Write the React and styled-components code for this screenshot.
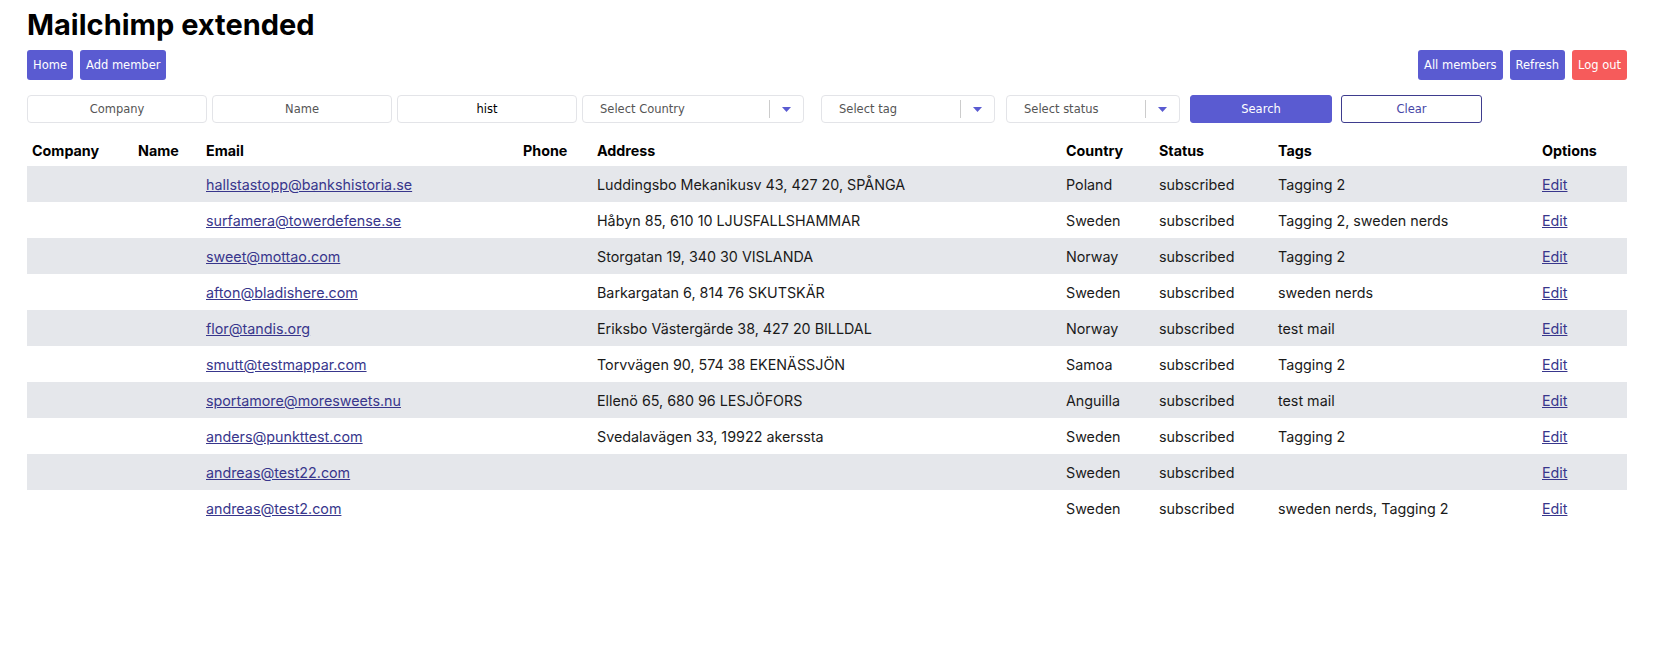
import React from "react";
import styled, { createGlobalStyle } from "styled-components";

const GlobalStyle = createGlobalStyle`
  body {
    margin: 0;
    background: #fff;
    font-family: Inter, "Liberation Sans", sans-serif;
    color: #111;
  }
`;

const Page = styled.div`
  padding: 0 28px 0 27px;
`;

const Title = styled.h1`
  margin: 7px 0 0;
  font-size: 29px;
  line-height: 36px;
  font-weight: 700;
  color: #000;
`;

const Toolbar = styled.div`
  display: flex;
  justify-content: space-between;
  margin-top: 7px;
`;

const ButtonGroup = styled.div`
  display: flex;
  gap: 7px;
`;

const NavButton = styled.button`
  height: 30px;
  padding: 0 6px;
  border: none;
  border-radius: 3px;
  background: ${(p) => (p.$danger ? "#f65b5b" : "#5a5bd1")};
  color: #fff;
  font-family: "DejaVu Sans", Tahoma, sans-serif;
  font-size: 11.5px;
  cursor: pointer;
`;

const FilterRow = styled.div`
  display: flex;
  align-items: center;
  margin-top: 15px;
  height: 28px;
`;

const TextInput = styled.input`
  box-sizing: border-box;
  width: 180px;
  height: 28px;
  margin-right: 5px;
  border: 1px solid #e3e4e8;
  border-radius: 4px;
  text-align: center;
  font-family: "DejaVu Sans", Tahoma, sans-serif;
  font-size: 11.5px;
  color: #000;
  outline: none;
  &::placeholder {
    color: #555;
  }
`;

const SelectBox = styled.div`
  box-sizing: border-box;
  display: flex;
  align-items: center;
  width: ${(p) => p.$width}px;
  height: 28px;
  margin-right: ${(p) => p.$gap}px;
  border: 1px solid #e3e4e8;
  border-radius: 4px;
  font-family: "DejaVu Sans", Tahoma, sans-serif;
  font-size: 11.5px;
  color: #555;
`;

const SelectLabel = styled.span`
  flex: 1;
  padding-left: 17px;
`;

const Separator = styled.span`
  width: 1px;
  height: 18px;
  background: #ccc;
`;

const Arrow = styled.span`
  width: 33px;
  display: flex;
  justify-content: center;
`;

const ActionButton = styled.button`
  box-sizing: border-box;
  width: ${(p) => p.$width}px;
  height: 28px;
  margin-right: 9px;
  border-radius: 3px;
  border: 1px solid ${(p) => (p.$outline ? "#3e3c8e" : "#5a5bd1")};
  background: ${(p) => (p.$outline ? "#fff" : "#5a5bd1")};
  color: ${(p) => (p.$outline ? "#4746a6" : "#fff")};
  font-family: "DejaVu Sans", Tahoma, sans-serif;
  font-size: 11.5px;
  cursor: pointer;
`;

const Table = styled.table`
  margin-top: 8px;
  width: 1600px;
  border-collapse: collapse;
  table-layout: fixed;
  font-size: 14.3px;
`;

const HeadCell = styled.th`
  width: ${(p) => p.$width - 10}px;
  height: 31px;
  padding: 4px 5px 0;
  text-align: left;
  font-weight: 700;
  color: #000;
`;

const Row = styled.tr`
  height: 36px;
  background: ${(p) => (p.$striped ? "#e5e7eb" : "#fff")};
`;

const Cell = styled.td`
  padding: 0 5px;
  color: #1a1a1a;
  white-space: nowrap;
`;

const Link = styled.a`
  color: #38368c;
  text-decoration: underline;
`;

const ArrowIcon = () => (
  <svg width="9" height="5" viewBox="0 0 9 5">
    <path d="M0 0 L9 0 L4.5 5 Z" fill="#5a5bd1" />
  </svg>
);

const Select = ({ label, width, gap }) => (
  <SelectBox $width={width} $gap={gap}>
    <SelectLabel>{label}</SelectLabel>
    <Separator />
    <Arrow>
      <ArrowIcon />
    </Arrow>
  </SelectBox>
);

const columns = [
  ["Company", 106],
  ["Name", 68],
  ["Email", 317],
  ["Phone", 74],
  ["Address", 469],
  ["Country", 93],
  ["Status", 119],
  ["Tags", 264],
  ["Options", 90],
];

const members = [
  ["hallstastopp@bankshistoria.se", "Luddingsbo Mekanikusv 43, 427 20, SPÅNGA", "Poland", "Tagging 2"],
  ["surfamera@towerdefense.se", "Håbyn 85, 610 10 LJUSFALLSHAMMAR", "Sweden", "Tagging 2, sweden nerds"],
  ["sweet@mottao.com", "Storgatan 19, 340 30 VISLANDA", "Norway", "Tagging 2"],
  ["afton@bladishere.com", "Barkargatan 6, 814 76 SKUTSKÄR", "Sweden", "sweden nerds"],
  ["flor@tandis.org", "Eriksbo Västergärde 38, 427 20 BILLDAL", "Norway", "test mail"],
  ["smutt@testmappar.com", "Torvvägen 90, 574 38 EKENÄSSJÖN", "Samoa", "Tagging 2"],
  ["sportamore@moresweets.nu", "Ellenö 65, 680 96 LESJÖFORS", "Anguilla", "test mail"],
  ["anders@punkttest.com", "Svedalavägen 33, 19922 akerssta", "Sweden", "Tagging 2"],
  ["andreas@test22.com", "", "Sweden", ""],
  ["andreas@test2.com", "", "Sweden", "sweden nerds, Tagging 2"],
];

export default function App() {
  return (
    <>
      <GlobalStyle />
      <Page>
        <Title>Mailchimp extended</Title>
        <Toolbar>
          <ButtonGroup>
            <NavButton>Home</NavButton>
            <NavButton>Add member</NavButton>
          </ButtonGroup>
          <ButtonGroup>
            <NavButton>All members</NavButton>
            <NavButton>Refresh</NavButton>
            <NavButton $danger>Log out</NavButton>
          </ButtonGroup>
        </Toolbar>
        <FilterRow>
          <TextInput placeholder="Company" />
          <TextInput placeholder="Name" />
          <TextInput defaultValue="hist" />
          <Select label="Select Country" width={222} gap={17} />
          <Select label="Select tag" width={174} gap={11} />
          <Select label="Select status" width={174} gap={10} />
          <ActionButton $width={142}>Search</ActionButton>
          <ActionButton $width={141} $outline>
            Clear
          </ActionButton>
        </FilterRow>
        <Table>
          <thead>
            <tr>
              {columns.map(([name, width]) => (
                <HeadCell key={name} $width={width}>
                  {name}
                </HeadCell>
              ))}
            </tr>
          </thead>
          <tbody>
            {members.map(([email, address, country, tags], i) => (
              <Row key={email} $striped={i % 2 === 0}>
                <Cell />
                <Cell />
                <Cell>
                  <Link href="#">{email}</Link>
                </Cell>
                <Cell />
                <Cell>{address}</Cell>
                <Cell>{country}</Cell>
                <Cell>subscribed</Cell>
                <Cell>{tags}</Cell>
                <Cell>
                  <Link href="#">Edit</Link>
                </Cell>
              </Row>
            ))}
          </tbody>
        </Table>
      </Page>
    </>
  );
}
